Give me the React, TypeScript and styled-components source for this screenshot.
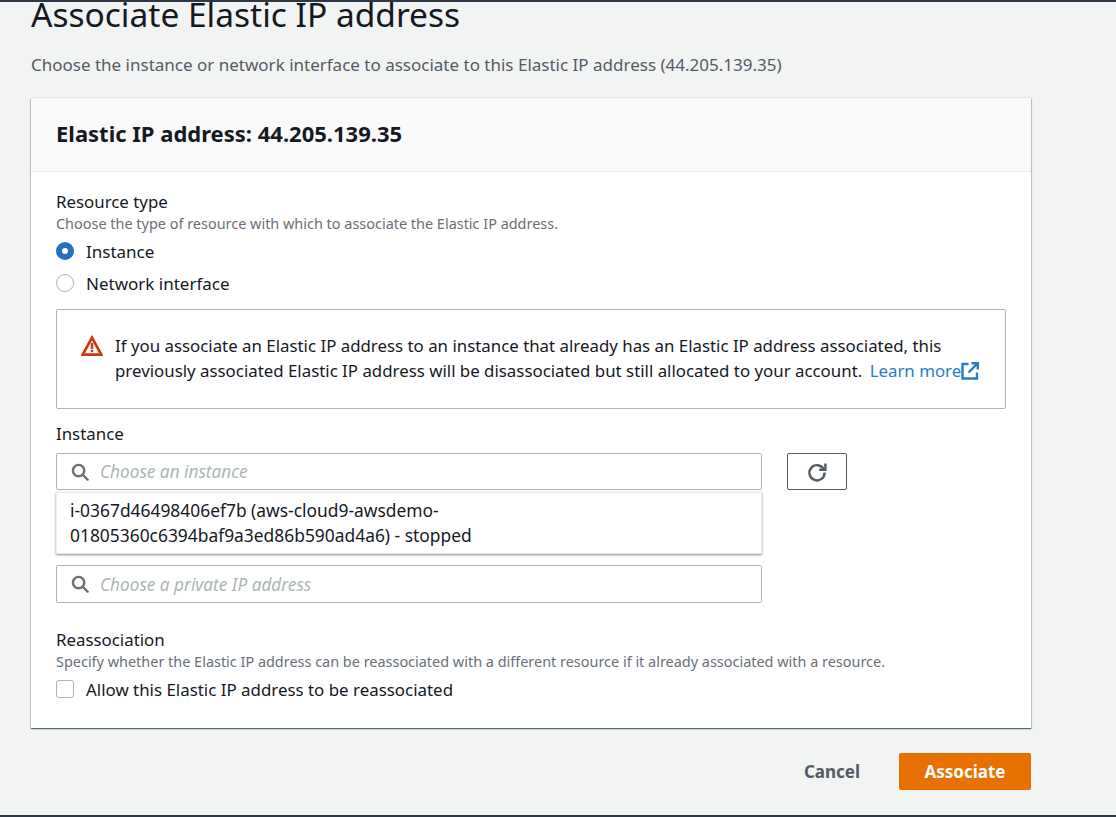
import styled, { createGlobalStyle } from 'styled-components';

const GlobalStyle = createGlobalStyle`
  html, body {
    margin: 0;
    padding: 0;
  }
  body {
    font-family: 'Noto Sans', 'Open Sans', sans-serif;
    background: #f2f3f3;
    color: #16191f;
    overflow: hidden;
  }
`;

function SearchIcon() {
  return (
    <SearchSvg viewBox="0 0 18 18" aria-hidden="true">
      <circle cx="7.6" cy="7.6" r="5.7" />
      <line x1="12" y1="12" x2="16.6" y2="16.6" />
    </SearchSvg>
  );
}

function SearchField({ placeholder, tall }: { placeholder: string; tall?: boolean }) {
  return (
    <Field $tall={tall}>
      <SearchIcon />
      <Placeholder>{placeholder}</Placeholder>
    </Field>
  );
}

export default function App() {
  return (
    <Page>
      <GlobalStyle />
      <Title>Associate Elastic IP address</Title>
      <Intro>Choose the instance or network interface to associate to this Elastic IP address (44.205.139.35)</Intro>
      <Card>
        <CardHeader>Elastic IP address: 44.205.139.35</CardHeader>
        <CardBody>
          <Label>Resource type</Label>
          <Hint>Choose the type of resource with which to associate the Elastic IP address.</Hint>
          <RadioGroup>
            <RadioRow>
              <Radio $checked />
              Instance
            </RadioRow>
            <RadioRow>
              <Radio />
              Network interface
            </RadioRow>
          </RadioGroup>
          <Warning>
            <WarningSvg viewBox="0 0 20 20" aria-hidden="true">
              <path d="M10 2.4 L18.4 17.8 H1.6 Z" fill="none" stroke="#d13212" strokeWidth="2.4" strokeLinejoin="miter" />
              <rect x="8.9" y="7.2" width="2.2" height="5.4" fill="#d13212" />
              <rect x="8.9" y="13.4" width="2.2" height="2.2" fill="#d13212" />
            </WarningSvg>
            <WarningText>
              If you associate an Elastic IP address to an instance that already has an Elastic IP address associated, this
              <br />
              previously associated Elastic IP address will be disassociated but still allocated to your account.{' '}
              <LearnMore>
                Learn more
                <ExternalSvg viewBox="0 0 18 18" aria-hidden="true">
                  <path d="M7.5 2 H1.5 V16.5 H16 V10.5" fill="none" stroke="#2b7bc6" strokeWidth="2.4" />
                  <path d="M10.5 1.2 H16.8 V7.5 M16.4 1.6 L7.5 10.5" fill="none" stroke="#2b7bc6" strokeWidth="2.4" />
                </ExternalSvg>
              </LearnMore>
            </WarningText>
          </Warning>
          <InstanceLabel>Instance</InstanceLabel>
          <InstanceRow>
            <SearchField placeholder="Choose an instance" />
            <RefreshButton>
              <svg width="22" height="22" viewBox="0 0 22 22" aria-hidden="true">
                <path d="M17.6 8 A7.6 7.6 0 1 0 18.6 11.5" fill="none" stroke="#545b64" strokeWidth="2.4" />
                <path d="M19.4 2.6 V8.8 H13.2" fill="none" stroke="#545b64" strokeWidth="2.4" />
              </svg>
            </RefreshButton>
            <Dropdown>
              i-0367d46498406ef7b (aws-cloud9-awsdemo-
              <br />
              01805360c6394baf9a3ed86b590ad4a6) - stopped
            </Dropdown>
          </InstanceRow>
          <PrivateField>
            <SearchField placeholder="Choose a private IP address" tall />
          </PrivateField>
          <ReassocLabel>Reassociation</ReassocLabel>
          <Hint>Specify whether the Elastic IP address can be reassociated with a different resource if it already associated with a resource.</Hint>
          <CheckRow>
            <Checkbox />
            Allow this Elastic IP address to be reassociated
          </CheckRow>
        </CardBody>
      </Card>
      <Actions>
        <CancelButton>Cancel</CancelButton>
        <PrimaryButton>Associate</PrimaryButton>
      </Actions>
    </Page>
  );
}

const Page = styled.div`
  box-sizing: border-box;
  width: 1116px;
  height: 817px;
  padding: 0 85px 0 31px;
  border-top: 2px solid #2c3845;
  border-bottom: 2px solid #2c3845;
  overflow: hidden;
`;

const Title = styled.h1`
  margin: 0;
  height: 28px;
  font-size: 33.5px;
  font-weight: 400;
  line-height: 24px;
  white-space: nowrap;
`;

const Intro = styled.p`
  margin: 24px 0 0;
  height: 22px;
  font-size: 17px;
  line-height: 22px;
  white-space: nowrap;
  color: #545b64;
`;

const Card = styled.section`
  margin-top: 22px;
  background: #fff;
  box-shadow: 0 1px 1px 0 rgba(0, 28, 36, 0.5), 1px 1px 1px 0 rgba(0, 28, 36, 0.15), -1px 1px 1px 0 rgba(0, 28, 36, 0.15),
    0 -1px 1px 0 rgba(0, 28, 36, 0.04);
`;

const CardHeader = styled.h2`
  margin: 0;
  height: 74px;
  box-sizing: border-box;
  padding: 0 25px 3px;
  display: flex;
  align-items: center;
  font-size: 22px;
  font-weight: 700;
  background: #fafafa;
  border-bottom: 1px solid #eaeded;
`;

const CardBody = styled.div`
  padding: 19px 25px 0;
  height: 556px;
  box-sizing: border-box;
`;

const Label = styled.div`
  font-size: 16.85px;
  line-height: 22px;
`;

const InstanceLabel = styled(Label)`
  margin-bottom: 8px;
`;

const Hint = styled.div`
  margin-top: 2px;
  font-size: 14.45px;
  line-height: 18px;
  white-space: nowrap;
  color: #687078;
`;

const RadioGroup = styled.div`
  margin-top: 2px;
  margin-bottom: 10px;
`;

const RadioRow = styled.div`
  display: flex;
  align-items: center;
  gap: 12px;
  height: 32px;
  font-size: 17px;
`;

const Radio = styled.span<{ $checked?: boolean }>`
  box-sizing: border-box;
  width: 18px;
  height: 18px;
  border-radius: 50%;
  background: #fff;
  border: ${(p) => (p.$checked ? '6px solid #2472bf' : '1.5px solid #aab7b8')};
`;

const Warning = styled.div`
  box-sizing: border-box;
  display: flex;
  height: 100px;
  margin: 9px 0 14px;
  padding: 23px 24px 0;
  background: #fff;
  border: 1px solid #aab7b8;
  border-radius: 2px;
`;

const WarningSvg = styled.svg`
  flex: none;
  width: 22px;
  height: 22px;
  margin-right: 12px;
  margin-top: 2px;
`;

const WarningText = styled.div`
  font-size: 16.85px;
  line-height: 25px;
  white-space: nowrap;
`;

const LearnMore = styled.span`
  margin-left: 3px;
  color: #2b7bc6;
`;

const ExternalSvg = styled.svg`
  width: 18px;
  height: 18px;
  vertical-align: -3px;
`;

const InstanceRow = styled.div`
  position: relative;
  display: flex;
  gap: 25px;
`;

const Field = styled.div<{ $tall?: boolean }>`
  box-sizing: border-box;
  display: flex;
  align-items: center;
  width: 706px;
  height: ${(p) => (p.$tall ? '38px' : '37px')};
  padding: 0 14px;
  background: #fff;
  border: 1px solid #aab7b8;
  border-radius: 2px;
`;

const SearchSvg = styled.svg`
  flex: none;
  width: 18px;
  height: 18px;
  margin-right: 11px;
  fill: none;
  stroke: #687078;
  stroke-width: 2.4;
  stroke-linecap: round;
`;

const Placeholder = styled.span`
  font-size: 17.2px;
  font-style: italic;
  color: #aab7b8;
`;

const RefreshButton = styled.button`
  display: flex;
  align-items: center;
  justify-content: center;
  width: 60px;
  height: 37px;
  padding: 0;
  background: #fff;
  border: 1px solid #545b64;
  border-radius: 2px;
`;

const Dropdown = styled.div`
  position: absolute;
  top: 39px;
  left: 0;
  box-sizing: border-box;
  width: 706px;
  height: 62px;
  padding: 5px 13px;
  font-size: 17.4px;
  line-height: 25px;
  white-space: nowrap;
  background: #fff;
  border: 1px solid #eaeded;
  box-shadow: 0 1px 2px 0 rgba(0, 28, 36, 0.5);
`;

const PrivateField = styled.div`
  margin-top: 75px;
`;

const ReassocLabel = styled(Label)`
  margin-top: 26px;
`;

const CheckRow = styled.div`
  display: flex;
  align-items: center;
  gap: 12px;
  margin-top: 6px;
  height: 24px;
  font-size: 16.9px;
`;

const Checkbox = styled.span`
  box-sizing: border-box;
  width: 18px;
  height: 18px;
  background: #fff;
  border: 1px solid #aab7b8;
  border-radius: 3px;
`;

const Actions = styled.div`
  display: flex;
  justify-content: flex-end;
  align-items: center;
  gap: 33px;
  margin-top: 25px;
`;

const CancelButton = styled.button`
  width: 68px;
  padding: 0;
  background: none;
  border: 0;
  font: 700 17px 'Noto Sans', sans-serif;
  color: #545b64;
`;

const PrimaryButton = styled.button`
  width: 132px;
  height: 37px;
  padding: 0;
  background: #e77000;
  border: 0;
  border-radius: 2px;
  font: 700 17px 'Noto Sans', sans-serif;
  color: #fff;
`;
